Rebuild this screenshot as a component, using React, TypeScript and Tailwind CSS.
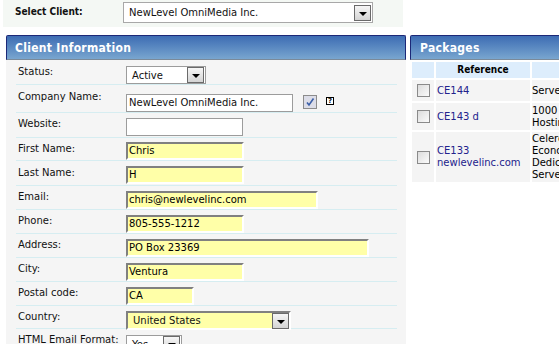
import React from "react";

const font = "font-['DejaVu_Sans',Verdana,sans-serif]";
const boldFont = "font-['DejaVu_Sans_Condensed','DejaVu_Sans',sans-serif] font-bold";

function Arrow() {
  return (
    <span className="flex h-[16px] w-[17px] shrink-0 items-center justify-center border border-[#6a6a6a] bg-linear-to-b from-[#f6f6f6] to-[#d4d4d4]">
      <span className="mt-[2px] h-0 w-0 border-x-[4px] border-t-[4px] border-x-transparent border-t-black" />
    </span>
  );
}

function YellowInput({ value, width }: { value: string; width: string }) {
  return (
    <div
      className={`${width} h-[18px] border-2 border-t-[#808080] border-l-[#808080] border-r-white border-b-white bg-[#ffffa8] pl-[1px] text-[10px] leading-[14px] text-black`}
    >
      {value}
    </div>
  );
}

type Row = {
  label: string;
  h: string;
  mt: string;
  pt: string;
  field: React.ReactNode;
};

export default function App() {
  const rows: Row[] = [
    {
      label: "Status:",
      h: "h-[25px]",
      mt: "mt-[6px]",
      pt: "pt-[6px]",
      field: (
        <div className="flex h-[18px] w-[80px] items-center justify-between border border-[#9c9c9c] bg-white pl-[5px] pr-[1px] text-[10px]">
          <span>Active</span>
          <Arrow />
        </div>
      ),
    },
    {
      label: "Company Name:",
      h: "h-[28px]",
      mt: "mt-[9px]",
      pt: "pt-[6px]",
      field: (
        <div className="flex items-start">
          <div className="h-[18px] w-[167px] border border-[#9c9c9c] bg-white pl-[2px] text-[10px] leading-[16px]">
            NewLevel OmniMedia Inc.
          </div>
          <span className="ml-[10px] mt-[1px] flex h-[14px] w-[14px] items-center justify-center border border-[#8c8c8c] bg-[#dcdde8]">
            <svg width="10" height="10" viewBox="0 0 10 10">
              <path d="M2 5.5 L4 8 L8.5 1.5" fill="none" stroke="#3b5fa8" strokeWidth="1.6" />
            </svg>
          </span>
          <span className="ml-[9px] mt-[3px] flex h-[8px] w-[8px] items-center justify-center border border-black bg-white text-[7px] font-bold leading-none">
            ?
          </span>
        </div>
      ),
    },
    {
      label: "Website:",
      h: "h-[25px]",
      mt: "mt-[5px]",
      pt: "pt-[5px]",
      field: <div className="h-[18px] w-[117px] border border-[#9c9c9c] bg-white" />,
    },
    { label: "First Name:", h: "h-[23px]", mt: "mt-[4px]", pt: "pt-[5px]", field: <YellowInput value="Chris" width="w-[118px]" /> },
    { label: "Last Name:", h: "h-[25px]", mt: "mt-[5px]", pt: "pt-[6px]", field: <YellowInput value="H" width="w-[118px]" /> },
    { label: "Email:", h: "h-[24px]", mt: "mt-[5px]", pt: "pt-[5px]", field: <YellowInput value="chris@newlevelinc.com" width="w-[192px]" /> },
    { label: "Phone:", h: "h-[24px]", mt: "mt-[5px]", pt: "pt-[5px]", field: <YellowInput value="805-555-1212" width="w-[118px]" /> },
    { label: "Address:", h: "h-[24px]", mt: "mt-[5px]", pt: "pt-[5px]", field: <YellowInput value="PO Box 23369" width="w-[243px]" /> },
    { label: "City:", h: "h-[24px]", mt: "mt-[5px]", pt: "pt-[5px]", field: <YellowInput value="Ventura" width="w-[118px]" /> },
    { label: "Postal code:", h: "h-[24px]", mt: "mt-[5px]", pt: "pt-[5px]", field: <YellowInput value="CA" width="w-[68px]" /> },
    {
      label: "Country:",
      h: "h-[23px]",
      mt: "mt-[5px]",
      pt: "pt-[5px]",
      field: (
        <div className="flex h-[19px] w-[165px] items-center justify-between border-2 border-t-[#808080] border-l-[#808080] border-r-white border-b-white bg-[#ffffa8] pl-[5px] text-[10px]">
          <span>United States</span>
          <Arrow />
        </div>
      ),
    },
    {
      label: "HTML Email Format:",
      h: "h-[24px]",
      mt: "mt-[6px]",
      pt: "pt-[5px]",
      field: (
        <div className="flex h-[18px] w-[56px] items-center justify-between border border-[#9c9c9c] bg-white pl-[5px] pr-[1px] text-[10px]">
          <span>Yes</span>
          <Arrow />
        </div>
      ),
    },
  ];

  const packages = [
    { ref: ["CE144"], desc: ["Server Backup"], h: "h-[21px]" },
    { ref: ["CE143 d"], desc: ["1000 MB", "Hosting Plan"], h: "h-[27px]" },
    { ref: ["CE133", "newlevelinc.com"], desc: ["Celeron", "Economy", "Dedicated", "Server"], h: "h-[50px]" },
  ];

  return (
    <div className={`${font} h-[344px] w-[559px] overflow-hidden bg-white text-[10px] text-[#111]`}>
      {/* Client picker */}
      <div className="ml-[3px] flex h-[27px] w-[400px] items-start bg-[#f4f8f4]">
        <span className={`${boldFont} ml-[12px] mt-[5px] w-[108px] text-[10px] leading-[13px]`}>Select Client:</span>
        <div className="mt-[2px] flex h-[21px] w-[250px] items-center justify-between border border-[#a8a8a8] bg-white pl-[5px] pr-[1px] text-[10px]">
          <span>NewLevel OmniMedia Inc.</span>
          <Arrow />
        </div>
      </div>

      <div className="mt-[8px] ml-[6px] flex gap-[4px]">
        {/* Client Information */}
        <div className="w-[400px] shrink-0">
          <div className="flex h-[25px] items-center rounded-t-[2px] border-x border-t border-b border-x-[#1c2877] border-t-[#1c2877] border-b-[#7b8a99] bg-linear-to-b from-[#3d6cb3] to-[#79a6cf] pl-[8px]">
            <span className={`${boldFont} text-[12px] tracking-[0.3px] text-white`}>Client Information</span>
          </div>
          <div className="h-[300px] bg-[#f5f5f5] pl-[10px] pr-[9px]">
            {rows.map((r) => (
              <div key={r.label} className={`flex ${r.h} border-b border-[#d6edf1]`}>
                <div className={`w-[110px] shrink-0 pl-[2px] ${r.pt} leading-[12px]`}>{r.label}</div>
                <div className={r.mt}>{r.field}</div>
              </div>
            ))}
          </div>
        </div>

        {/* Packages */}
        <div className="w-[300px] shrink-0">
          <div className="flex h-[25px] items-center rounded-t-[2px] border-x border-t border-b border-x-[#1c2877] border-t-[#1c2877] border-b-[#7b8a99] bg-linear-to-b from-[#3d6cb3] to-[#79a6cf] pl-[9px]">
            <span className={`${boldFont} text-[12px] tracking-[0.3px] text-white`}>Packages</span>
          </div>
          <div className="flex flex-col gap-[2px] bg-white pl-[2px] pt-[2px]">
            <div className="flex h-[16px] gap-[2px]">
              <div className="w-[22px] bg-[#ddedfc]" />
              <div className={`${boldFont} w-[94px] bg-[#ddedfc] text-center text-[10px] leading-[16px] text-black`}>Reference</div>
              <div className="w-[120px] bg-[#ddedfc]" />
            </div>
            {packages.map((p) => (
              <div key={p.ref[0]} className={`flex ${p.h} gap-[2px]`}>
                <div className="flex w-[22px] items-center justify-center bg-[#f4f4f4]">
                  <span className="h-[13px] w-[13px] border border-[#8a8a8a] bg-linear-to-br from-[#dcdcdc] to-[#fbfbfb]" />
                </div>
                <div className="flex w-[94px] flex-col justify-center bg-[#f4f4f4] pl-[1px] leading-[12px] text-[#22228c]">
                  {p.ref.map((t) => (
                    <span key={t}>{t}</span>
                  ))}
                </div>
                <div className="flex w-[120px] flex-col justify-center bg-[#f4f4f4] leading-[12px] text-black">
                  {p.desc.map((t) => (
                    <span key={t}>{t}</span>
                  ))}
                </div>
              </div>
            ))}
          </div>
        </div>
      </div>
    </div>
  );
}
